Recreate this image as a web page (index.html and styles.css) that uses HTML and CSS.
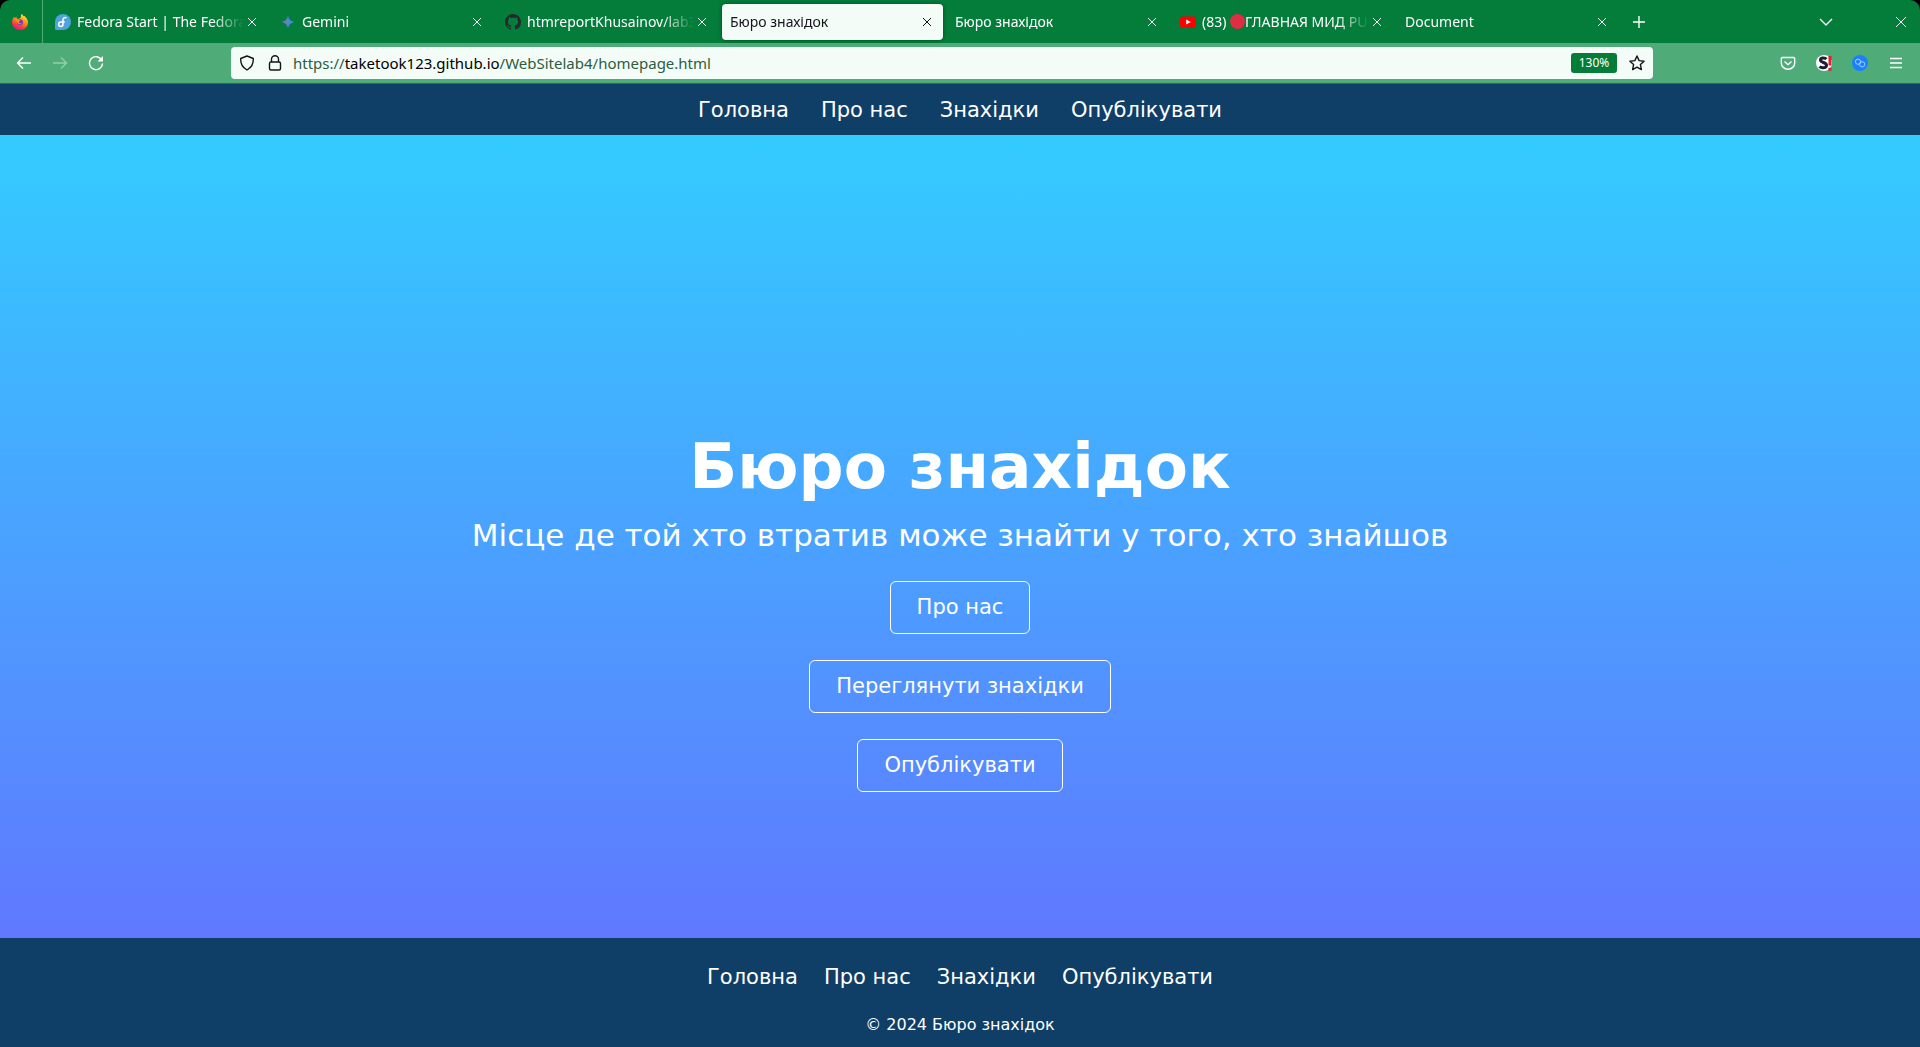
FILE: index.html
```html
<!DOCTYPE html>
<html lang="uk">
<head>
<meta charset="utf-8">
<title>Бюро знахідок</title>
<link rel="stylesheet" href="styles.css">
</head>
<body>
<div class="browser">
  <div class="tabbar">
    <button class="pinned" aria-label="Firefox">
      <svg class="icon" viewBox="0 0 16 16">
        <defs>
          <linearGradient id="fox" x1="0.8" y1="0" x2="0.3" y2="1"><stop offset="0" stop-color="#fff44f"/><stop offset=".4" stop-color="#ff980e"/><stop offset=".75" stop-color="#ff3647"/><stop offset="1" stop-color="#e31587"/></linearGradient>
          <linearGradient id="gem" x1="0" y1="0.6" x2="1" y2="0.4"><stop offset="0" stop-color="#9168c0"/><stop offset=".5" stop-color="#5684d1"/><stop offset="1" stop-color="#1ba1e3"/></linearGradient>
        </defs>
        <path fill="url(#fox)" d="M9.800 0c1 .8 1.300 1.600 1.500 2.300l.7-.5c1.500 1 4 3.300 4 6.700 0 4.200-3.500 7.500-7.900 7.500S0 12.700 0 8.500C0 6 1.100 4 2.200 2.800l.5 1.500 1.500-1.500.6 1.600 1.700.5L9 3.500C8.700 2.200 9 .9 9.800 0z"/>
        <circle cx="8" cy="8.300" r="3" fill="#7139c9"/>
        <path fill="#ff8a16" d="M2.800 5.500c1.400-1 3-.6 4 .2l1.800.2c0 1-1.600 1.200-1.900 1.900 0 1.200 1.900 2.100 3.300 1.400-.9 1.800-4.500 1.500-5-1.200z"/>
      </svg>
    </button>
    <div class="tab">
      <svg class="icon" viewBox="0 0 16 16"><path fill="#51a2da" d="M8 0a8 8 0 1 1 0 16H1.500A1.500 1.500 0 0 1 0 14.500V8a8 8 0 0 1 8-8z"/><path fill="none" stroke="#fff" stroke-width="1.500" d="M11.500 3.700C9.700 2.900 8 4 8 5.800v4.400a2.200 2.200 0 1 1-2.200-2.200h4"/></svg>
      <span class="label">Fedora Start | The Fedora</span>
      <button class="close" aria-label="Закрити"><svg viewBox="0 0 10 10"><path d="M1 1l8 8M9 1l-8 8"/></svg></button>
    </div>
    <div class="tab">
      <svg class="icon" viewBox="0 0 16 16"><path fill="url(#gem)" d="M8 1.500c.6 3.800 2.700 5.900 6.500 6.500-3.800.6-5.900 2.700-6.500 6.500C7.400 10.700 5.300 8.600 1.500 8 5.300 7.400 7.400 5.300 8 1.500z"/></svg>
      <span class="label">Gemini</span>
      <button class="close" aria-label="Закрити"><svg viewBox="0 0 10 10"><path d="M1 1l8 8M9 1l-8 8"/></svg></button>
    </div>
    <div class="tab">
      <svg class="icon" viewBox="0 0 16 16"><path fill="#24292e" d="M8 0C3.580 0 0 3.580 0 8c0 3.540 2.290 6.530 5.470 7.590.4.070.55-.17.55-.38 0-.19-.01-.82-.01-1.490-2.010.37-2.530-.49-2.690-.94-.09-.23-.48-.94-.82-1.130-.28-.15-.68-.52-.01-.53.63-.01 1.080.58 1.230.82.72 1.210 1.870.87 2.330.66.070-.52.28-.87.51-1.070-1.780-.2-3.640-.89-3.640-3.950 0-.87.31-1.590.82-2.150-.08-.2-.36-1.020.08-2.120 0 0 .67-.21 2.200.82.64-.18 1.320-.27 2-.27s1.360.09 2 .27c1.530-1.040 2.200-.82 2.200-.82.44 1.100.16 1.920.08 2.120.51.56.82 1.270.82 2.150 0 3.070-1.870 3.750-3.650 3.950.29.25.54.73.54 1.480 0 1.070-.01 1.930-.01 2.200 0 .21.15.46.55.38A8.010 8.010 0 0 0 16 8c0-4.420-3.580-8-8-8z"/></svg>
      <span class="label">htmreportKhusainov/lab3</span>
      <button class="close" aria-label="Закрити"><svg viewBox="0 0 10 10"><path d="M1 1l8 8M9 1l-8 8"/></svg></button>
    </div>
    <div class="tab active">
      <span class="label">Бюро знахідок</span>
      <button class="close" aria-label="Закрити"><svg viewBox="0 0 10 10"><path d="M1 1l8 8M9 1l-8 8"/></svg></button>
    </div>
    <div class="tab">
      <span class="label">Бюро знахідок</span>
      <button class="close" aria-label="Закрити"><svg viewBox="0 0 10 10"><path d="M1 1l8 8M9 1l-8 8"/></svg></button>
    </div>
    <div class="tab">
      <svg class="icon" viewBox="0 0 16 16"><rect y="2.500" width="16" height="11" rx="2.500" fill="#f00"/><path fill="#fff" d="M6.200 5.500v5L10.800 8z"/></svg>
      <span class="label">(83) <span class="dot"></span>ГЛАВНАЯ МИД PU</span>
      <button class="close" aria-label="Закрити"><svg viewBox="0 0 10 10"><path d="M1 1l8 8M9 1l-8 8"/></svg></button>
    </div>
    <div class="tab">
      <span class="label">Document</span>
      <button class="close" aria-label="Закрити"><svg viewBox="0 0 10 10"><path d="M1 1l8 8M9 1l-8 8"/></svg></button>
    </div>
    <button class="tool newtab" aria-label="Нова вкладка"><svg class="icon" viewBox="0 0 16 16"><path d="M8 2v12M2 8h12"/></svg></button>
    <div class="window-tools">
      <button class="tool" aria-label="Усі вкладки"><svg class="icon" viewBox="0 0 16 16"><path d="M2 5l6 6 6-6"/></svg></button>
      <button class="tool thin" aria-label="Закрити вікно"><svg class="icon" viewBox="0 0 16 16"><path d="M3 3l10 10M13 3L3 13"/></svg></button>
    </div>
  </div>
  <div class="toolbar">
    <div class="history">
      <button class="tool" aria-label="Назад"><svg class="icon" viewBox="0 0 16 16"><path d="M15 8H1.500M7 2.500L1.500 8 7 13.500"/></svg></button>
      <button class="tool" aria-label="Вперед" disabled><svg class="icon" viewBox="0 0 16 16"><path d="M1 8h13.500M9 2.500L14.500 8 9 13.500"/></svg></button>
      <button class="tool" aria-label="Оновити"><svg class="icon" viewBox="0 0 16 16"><path d="M13.700 5A6.500 6.500 0 1 0 14.500 8.500"/><path class="solid" d="M15 1v5.500H9.500z"/></svg></button>
    </div>
    <div class="urlbar">
      <svg class="icon" viewBox="0 0 16 16"><path d="M8 1l6.300 2.500c.3 5-1.800 9-6.300 11.500C3.500 12.500 1.400 8.500 1.700 3.500z"/></svg>
      <svg class="icon lock" viewBox="0 0 16 16"><rect x="2.500" y="7" width="11" height="8" rx="1.500"/><path d="M4.500 7V4.200a3.500 3.500 0 0 1 7 0V7"/></svg>
      <a class="url" href="https://taketook123.github.io/WebSitelab4/homepage.html">https://<b>taketook123.github.io</b>/WebSitelab4/homepage.html</a>
      <button class="zoom">130%</button>
      <svg class="icon" viewBox="0 0 16 16"><path d="M8 1l2.100 4.600 5 .6-3.700 3.400 1 5L8 12.100l-4.400 2.500 1-5L.9 6.200l5-.6z"/></svg>
    </div>
    <div class="extensions">
      <button class="tool" aria-label="Pocket"><svg class="icon" viewBox="0 0 16 16"><path d="M2.500 2.500h11a1.200 1.200 0 0 1 1.200 1.200V8a6.700 6.200 0 0 1-13.400 0V3.700a1.200 1.200 0 0 1 1.200-1.200zM4.500 6.500L8 9.700l3.500-3.200"/></svg></button>
      <button class="tool" aria-label="S!"><svg class="icon" viewBox="0 0 16 16"><circle class="disc" cx="8" cy="8" r="8"/><path class="letter" d="M10.500 4C9 2.500 4.500 2.300 4.500 5c0 2.800 6 2.200 6 5.200 0 3.200-5 3.100-7 1.500"/><path class="bang" d="M14 1v9.500M14 12.700V15.700"/></svg></button>
      <button class="tool" aria-label="Посилання"><svg class="icon" viewBox="0 0 16 16"><circle class="blue" cx="8" cy="8" r="8"/><circle class="link" cx="6" cy="6.700" r="2.600"/><circle class="link" cx="10.200" cy="9.300" r="2.600"/></svg></button>
      <button class="tool" aria-label="Меню"><svg class="icon" viewBox="0 0 16 16"><path d="M2 3.500h12M2 8h12M2 12.500h12"/></svg></button>
    </div>
  </div>
</div>
<header class="site-header">
  <nav class="nav">
    <a href="#home">Головна</a><a href="#about">Про нас</a><a href="#finds">Знахідки</a><a href="#publish">Опублікувати</a>
  </nav>
</header>
<main class="hero">
  <h1>Бюро знахідок</h1>
  <p>Місце де той хто втратив може знайти у того, хто знайшов</p>
  <div class="actions">
    <a class="btn" href="#about">Про нас</a>
    <a class="btn" href="#finds">Переглянути знахідки</a>
    <a class="btn" href="#publish">Опублікувати</a>
  </div>
</main>
<footer class="site-footer">
  <nav class="nav">
    <a href="#home">Головна</a><a href="#about">Про нас</a><a href="#finds">Знахідки</a><a href="#publish">Опублікувати</a>
  </nav>
  <p>© 2024 Бюро знахідок</p>
</footer>
</body>
</html>
```
FILE: styles.css
```css
* { box-sizing: border-box; }
html { background: #000; }
body {
  margin: 0;
  min-height: 100vh;
  display: flex;
  flex-direction: column;
  font-family: "DejaVu Sans", sans-serif;
  font-size: 21px;
  color: #fff;
}
button { padding: 0; border: 0; background: none; color: inherit; font: inherit; }
a { color: inherit; text-decoration: none; }

.browser {
  font-family: "Noto Sans", sans-serif;
  font-size: 14px;
  border-bottom: 1px solid #1b7452;
}
.icon { display: block; flex: none; width: 16px; height: 16px; }
.tabbar {
  display: flex;
  align-items: center;
  height: 43px;
  background: #047d3a;
  border-radius: 10px 10px 0 0;
}
.pinned {
  display: flex;
  align-items: center;
  height: 43px;
  padding: 0 14px 0 12px;
  margin-right: 2px;
  border-right: 1px solid #4fac78;
}
.tab {
  display: flex;
  align-items: center;
  gap: 6px;
  flex: 0 1 221px;
  min-width: 0;
  height: 36px;
  margin: 0 2px;
  padding: 0 8px;
  border-radius: 4px;
}
.tab.active { background: #f3fcf7; color: #15141a; box-shadow: 0 0 4px rgba(0, 0, 0, .4); }
.label {
  flex: 1;
  margin-right: -6px;
  overflow: hidden;
  white-space: nowrap;
  line-height: 20px;
  mask-image: linear-gradient(to left, transparent, #000 32px);
}
.dot { display: inline-block; width: 15px; height: 15px; border-radius: 50%; background: #dd2e44; vertical-align: -2px; }
.close { display: flex; justify-content: center; flex: none; width: 16px; }
.close svg { width: 10px; height: 10px; fill: none; stroke: currentColor; }
.tool .icon, .urlbar .icon { fill: none; stroke: currentColor; stroke-width: 1.4; stroke-linejoin: round; }
.tool.thin .icon { stroke-width: 1; }
.newtab { margin-left: 11px; }
.window-tools { display: flex; gap: 59px; margin-left: auto; padding-right: 11px; }

.toolbar {
  display: grid;
  grid-template-columns: 231px minmax(0, 1422px) 1fr;
  align-items: center;
  height: 40px;
  background: #4fac78;
}
.history { display: flex; gap: 20px; padding-left: 16px; }
.tool:disabled { opacity: .4; }
.tool .solid { fill: currentColor; stroke: none; }
.urlbar {
  display: flex;
  align-items: center;
  height: 32px;
  padding: 0 8px;
  border-radius: 4px;
  background: #f3fcf7;
  color: #15141a;
}
.lock { margin: 0 10px 0 12px; }
.url { flex: 1; font-size: 15px; color: #2c5c42; }
.url b { font-weight: 400; color: #000; }
.zoom { height: 20px; width: 46px; margin-right: 12px; border-radius: 3px; background: #047d3a; color: #fff; font-size: 12px; line-height: 20px; }
.extensions { display: flex; justify-content: flex-end; gap: 20px; padding-right: 16px; }
.tool .disc { fill: #fff; stroke: none; }
.tool .letter { stroke: #1e1e32; stroke-width: 3; }
.tool .bang { stroke: #e0202c; stroke-width: 3; }
.tool .blue { fill: #1a80ff; stroke: none; }
.tool .link { stroke: #a8d0ff; stroke-width: 1; }

.site-header { padding: 14px 0 12px; background: #0f3e67; }
.nav { display: flex; justify-content: center; line-height: 25px; }
.site-header .nav { gap: 32px; }
.hero {
  flex: 1;
  display: flex;
  flex-direction: column;
  align-items: center;
  justify-content: center;
  padding-top: 148px;
  background: linear-gradient(#33ccff, #6078ff);
}
.hero h1 { margin: 0; font-size: 63px; line-height: 74px; }
.hero p { margin: 13px 0 28px; font-size: 31px; line-height: 36px; }
.actions { display: flex; flex-direction: column; align-items: center; gap: 26px; }
.btn { padding: 13px 26px; border: 1px solid #fff; border-radius: 6px; line-height: 25px; }
.site-footer { padding: 27px 0 13px; background: #0f3e67; text-align: center; }
.site-footer .nav { gap: 26px; }
.site-footer p { margin: 25px 0 0; font-size: 16px; line-height: 19px; }
```
